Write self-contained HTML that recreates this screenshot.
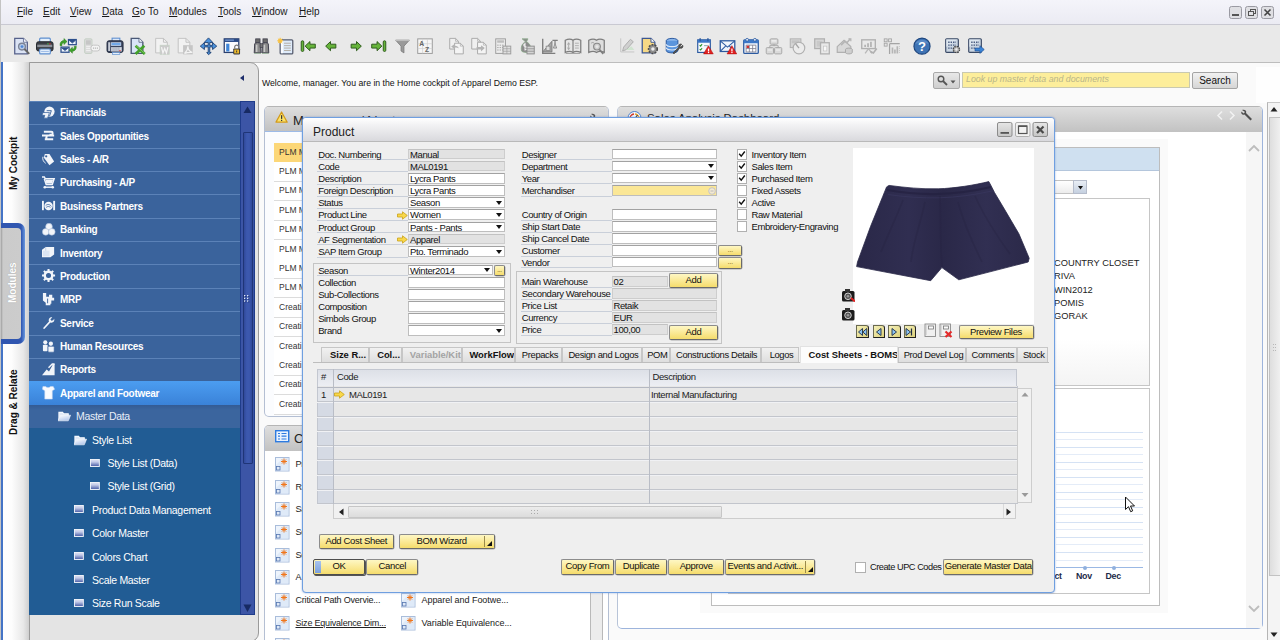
<!DOCTYPE html>
<html><head><meta charset="utf-8">
<style>
*{box-sizing:border-box;margin:0;padding:0}
html,body{width:1280px;height:640px;overflow:hidden;background:#fafafa;font-family:"Liberation Sans",sans-serif;font-size:9px;color:#222}
.a{position:absolute}
.t{position:absolute;white-space:nowrap;line-height:1}
#menubar{left:0;top:0;width:1280px;height:25px;background:linear-gradient(#f4f4fa,#ebebf3);border-bottom:1px solid #c9c9d2}
#menubar .t{top:6.5px;font-size:10px;color:#1a1a1a}
#toolbar{left:0;top:25px;width:1280px;height:37.6px;background:#e9e9e9;border-bottom:1px solid #bdbdbd}
#lstrip{left:0;top:62px;width:29px;height:578px;background:linear-gradient(90deg,#fff 0,#fdfdfd 40%,#e8e8e8 80%,#cfcfcf 100%)}
#lpanel{left:29px;top:62px;width:230px;height:580px;background:#e4e4e4;border:1px solid #9a9a9a;border-radius:0 9px 9px 0}
.mi{position:absolute;left:29px;width:212px;height:23.38px;background:#3a639c;border-top:1px solid #5b82b8;color:#fff;font-weight:bold;font-size:10px;letter-spacing:-.3px}
.mi span{position:absolute;top:6.5px;white-space:nowrap;line-height:1}
.mi.sub{background:#215c94;border-top:1px solid #215c94;font-weight:normal;font-size:10.5px;letter-spacing:-.3px}
.mi.sub span{top:5.5px}
.vt{position:absolute;white-space:nowrap;transform-origin:0 0;transform:rotate(-90deg);font-weight:bold;font-size:10.5px;line-height:1}
/* widgets */
.wg{position:absolute;border:1px solid #b4bfd3;border-top-color:#b5b5b5;border-radius:5px 5px 0 0;background:#fff}
.wh{position:absolute;left:0;top:0;right:0;height:25px;background:linear-gradient(#dedede,#c2c2c2);border-radius:4px 4px 0 0}
.row{position:absolute;left:9px;height:19.5px;border-bottom:1px solid #dcdcdc;font-size:8.5px;color:#333}
.row span{position:absolute;left:5px;top:4.5px;line-height:1;white-space:nowrap}
/* dialog */
#dlg .l{position:absolute;white-space:nowrap;line-height:1;font-size:9.5px;letter-spacing:-.4px;color:#111;border-bottom:1px solid #c9cfd9;height:10.7px;padding-left:1.2px}
#dlg .f{position:absolute;height:10.7px;background:#fff;border:1px solid #bebebe;border-top-color:#a2a2a2;font-size:9.5px;letter-spacing:-.4px;line-height:9.5px;padding-left:1px;white-space:nowrap;overflow:visible;color:#111}
#dlg .f.g{background:#e2e2e2;border-color:#cdcdcd;border-top-color:#c2c2c2}
#dlg .f.y{background:#fbe796}
#dlg .dd:after{content:"";position:absolute;right:2.5px;top:2.5px;border:3px solid transparent;border-top:4px solid #111;border-bottom:0}
.yb{position:absolute;background:linear-gradient(#fef7c4,#fbeb9c 45%,#f5dc6c);border:1px solid #8c8c8c;border-bottom-color:#6a6a6a;border-right-color:#6a6a6a;border-radius:2px;font-size:9.5px;letter-spacing:-.35px;text-align:center;color:#111;white-space:nowrap;box-shadow:.5px .5px 0 #aaa}
.cb{position:absolute;width:10px;height:10px;background:#fff;border:1px solid #b0b0b0}
.tab{position:absolute;top:346.5px;height:15px;border:1px solid #c6c6c6;border-bottom:0;background:linear-gradient(#f1f1f1,#dedede);font-size:9.4px;letter-spacing:-.35px;line-height:14px;padding-left:3px;text-align:center;white-space:nowrap;overflow:hidden;color:#111}
</style></head><body>
<div id="menubar" class="a">
<span class="t" style="left:17px"><u>F</u>ile</span>
<span class="t" style="left:43px"><u>E</u>dit</span>
<span class="t" style="left:70px"><u>V</u>iew</span>
<span class="t" style="left:102px"><u>D</u>ata</span>
<span class="t" style="left:132px"><u>G</u>o To</span>
<span class="t" style="left:169px"><u>M</u>odules</span>
<span class="t" style="left:218px"><u>T</u>ools</span>
<span class="t" style="left:252px"><u>W</u>indow</span>
<span class="t" style="left:299px"><u>H</u>elp</span>
</div>
<div id="toolbar" class="a"></div>
<svg class="a" style="left:1225px;top:3px" width="55" height="18" viewBox="0 0 55 18">
<g fill="#dfdfe3" stroke="#9a9aa2" stroke-width="1">
<rect x="4.5" y="3.5" width="12" height="12" rx="2"/><rect x="20.5" y="3.5" width="12" height="12" rx="2"/><rect x="36.5" y="3.5" width="12" height="12" rx="2"/></g>
<rect x="7" y="11" width="7" height="2" fill="#555"/>
<g fill="none" stroke="#555" stroke-width="1"><rect x="25.5" y="6.5" width="5" height="4"/><rect x="23.5" y="8.5" width="5" height="4" fill="#e2e2e6"/></g>
<path d="M39.5 6.5l6 6M45.5 6.5l-6 6" stroke="#444" stroke-width="1.6"/>
</svg>
<svg class="a" style="left:0;top:25px" width="1280" height="37" viewBox="0 0 1280 37" font-family="Liberation Sans"><g transform="translate(13.27 12.400) scale(.97)"><path d="M1.500 1h9l4 4v12h-13z" fill="#dbe3f4" stroke="#56618a" stroke-width="1.300"/><path d="M10.500 1v4h4" fill="#f4f6fb" stroke="#56618a" stroke-width=".8"/><circle cx="9" cy="9.500" r="3.500" fill="#b9cdea" stroke="#7c8496" stroke-width="1.400"/><circle cx="9" cy="9.500" r="1.500" fill="#4f86d6"/><path d="M11.500 12l5 5" stroke="#666" stroke-width="2"/></g><g transform="translate(35.77 12.400) scale(.97)"><rect x="4" y=".8" width="11" height="5" rx="1" fill="#e4effb" stroke="#5e8fd0" stroke-width="1.200"/><rect x=".8" y="4.500" width="17" height="9.500" rx="2" fill="#3c3f46" stroke="#22252a"/><rect x="1.500" y="7.500" width="15.500" height="2.500" fill="#8b9098"/><rect x="12" y="6" width="1.200" height="1.200" fill="#4c4"/><rect x="14" y="6" width="1.200" height="1.200" fill="#e33"/><rect x="4" y="12" width="11" height="5" rx="1" fill="#e4effb" stroke="#5e8fd0" stroke-width="1.200"/><path d="M5.500 14.500h8" stroke="#9dbbe6"/></g><g transform="translate(59.27 12.400) scale(.97)"><rect x="9.500" y="2.200" width="8" height="5.300" fill="#eef3fb" stroke="#2d4f8c" stroke-width="1.300"/><path d="M10 2.800l3.500 3 3.500-3" fill="#2d4f8c" stroke="#2d4f8c" stroke-width=".8"/><rect x="1.800" y="10" width="8.300" height="5.300" fill="#eef3fb" stroke="#2d4f8c" stroke-width="1.300"/><path d="M2.300 10.600l3.600 3 3.600-3" fill="#2d4f8c" stroke="#2d4f8c" stroke-width=".8"/><path d="M.8 8.500C.5 5 2.500 3.300 4.800 3.300V1.200L8 4.300 4.800 7.400V5.500C3.300 5.500 2.600 6.500 2.800 8.500z" fill="#3fa22c" stroke="#2a7a1c" stroke-width=".5"/><path d="M17.500 9c.3 3.500-1.700 5.200-4 5.200v2.100l-3.200-3.100 3.200-3.100V12c1.500 0 2.200-1 2-3z" fill="#3fa22c" stroke="#2a7a1c" stroke-width=".5"/></g><g transform="translate(82.27 12.400) scale(.97)"><rect x="2.500" y="1.500" width="7.500" height="15" rx="1" fill="#dcdcdc" stroke="#bccabc" stroke-width=".8"/><rect x="3.800" y="3" width="5" height="4.500" fill="#c6c6c6"/><path d="M4 9.500h4.500M4 11.500h4.500M4 13.500h4.500" stroke="#f0f0f0" stroke-width="1"/><rect x="9" y="8" width="9" height="6" rx="2.500" fill="#f4f4f4" stroke="#c4c4c4"/><path d="M11 11h5.500" stroke="#b5b5b5" stroke-width="1.300" stroke-dasharray="1.200 .8"/></g><g transform="translate(106.27 12.400) scale(.97)"><rect x="6" y=".8" width="8" height="4" fill="#dce8f8" stroke="#5e8fd0" stroke-width="1.100"/><rect x=".8" y="3.500" width="16.500" height="12" rx="2" fill="#3b4660" stroke="#232b3e"/><rect x="2" y="5" width="2" height="9" fill="#c9ced8"/><rect x="5" y="5.500" width="10" height="3" fill="#6fa8ea" stroke="#e4ecf8" stroke-width=".6"/><rect x="5" y="10" width="11" height="4.500" fill="#d2d7e0"/><path d="M7 10v4.500M9 10v4.500M11 10v4.500M13 10v4.500" stroke="#8a93a6" stroke-width=".7"/><rect x="13.500" y="13" width="1.200" height="1.200" fill="#e33"/><rect x="6.500" y="15.500" width="7.500" height="2" fill="#e4effb" stroke="#5e8fd0" stroke-width=".7"/></g><g transform="translate(129.27 12.400) scale(.97)"><path d="M2 1h8l4 4v11.500H2z" fill="#d8e5f7" stroke="#4a5876" stroke-width="1.400"/><path d="M10 1v4h4" fill="#f4f7fc" stroke="#4a5876" stroke-width=".8"/><path d="M6.500 8.500l9.500 8.500M15.500 8.500l-9 8.500" stroke="#43a12a" stroke-width="2.800"/><path d="M7 8.500l9 8" stroke="#8fd070" stroke-width=".8"/></g><g transform="translate(152.77 12.400) scale(.97)"><path d="M3 1h8l4 4v11H3z" fill="#f2f2f2" stroke="#c2c2c2"/><path d="M11 1v4h4" fill="none" stroke="#c2c2c2"/><rect x="7.500" y="8" width="9.500" height="9.500" fill="#cbcbcb" stroke="#c3d3c3" stroke-width=".6"/><path d="M9 10l1.500 6 1.800-4.500 1.800 4.500 1.500-6" fill="none" stroke="#f4f4f4" stroke-width="1.300"/></g><g transform="translate(176.27 12.400) scale(.97)"><path d="M2 1h8l4 4v11H2z" fill="#f2f2f2" stroke="#c2c2c2"/><path d="M10 1v4h4" fill="none" stroke="#c2c2c2"/><rect x="7" y="8" width="10" height="9.500" fill="#c6c6c6"/><path d="M8.500 16.500c2-2 3.500-5 3.500-7.500 0 3 2 5.500 4.500 6.500-3-.3-5.500 0-8 1z" fill="none" stroke="#f4f4f4" stroke-width="1.200"/></g><g transform="translate(199.77 12.400) scale(.97)"><path d="M9 .5l4.500 4.800h-3.200v2.900h2.900V5.500l4.300 3.500-4.300 3.500V9.800h-2.900v5.700h1.500L9 17.800 7.200 15.500h1.500V9.800H4.800v2.700L.5 9l4.300-3.500v2.700h3.900V5.300H4.500z" fill="#4a92dc" stroke="#1d3f73" stroke-width=".9" stroke-linejoin="round"/></g><g transform="translate(223.27 12.400) scale(.97)"><rect x="1" y="1.500" width="15" height="14" fill="#fbfcfe" stroke="#2a3f6e" stroke-width="1.300"/><rect x="1" y="1.500" width="15" height="3.200" fill="#2a4a86"/><rect x="2" y="2.300" width="9" height="1" fill="#8fb4e6"/><rect x="3" y="6.500" width="3.300" height="8" fill="#3f86d8"/><rect x="10.300" y="11.500" width="7" height="6" rx=".8" fill="#3a3a3a"/><rect x="11.300" y="12.500" width="5" height="4" fill="#eab82e"/><path d="M11.800 11.500V10a2 2 0 0 1 4 0v1.500" fill="none" stroke="#777" stroke-width="1.200"/><rect x="13.300" y="13.500" width="1" height="2" fill="#3a3a3a"/></g><g transform="translate(252.77 12.400) scale(.97)"><rect x="3" y="1.500" width="4.500" height="4" fill="#6a6a6a" stroke="#3c3c4a" stroke-width=".8"/><rect x="10.500" y="1.500" width="4.500" height="4" fill="#6a6a6a" stroke="#3c3c4a" stroke-width=".8"/><path d="M2 6.500c.5-1.500 5.500-1.500 6 0l.5 9.500H1.500z" fill="#8c8c8c" stroke="#3c3c4a" stroke-width="1"/><path d="M10 6.500c.5-1.500 5.500-1.500 6 0l.5 9.500h-7z" fill="#8c8c8c" stroke="#3c3c4a" stroke-width="1"/><rect x="7.500" y="6.500" width="3" height="4" fill="#777" stroke="#3c3c4a" stroke-width=".7"/><path d="M4 7.500v7.500M12 7.500v7.500" stroke="#c9c9c9" stroke-width="1.600"/><path d="M1.500 16.500h7M9.500 16.500h7" stroke="#9ab89a" stroke-width=".8"/></g><g transform="translate(276.77 12.400) scale(.97)"><rect x="3.500" y="2.500" width="13" height="14.500" rx="1" fill="#deebfa" stroke="#565c6e" stroke-width="1.300"/><rect x="4.300" y="3.300" width="2" height="13" fill="#fbfcfe"/><path d="M7.500 6h7M7.500 8.500h7M7.500 11h7M7.500 13.500h7" stroke="#b3aca4" stroke-width="1"/><circle cx="3.500" cy="3.500" r="2.300" fill="#f8c84e"/><path d="M3.500 .3v6.400M.3 3.500h6.400M1.200 1.200l4.600 4.600M5.800 1.200L1.200 5.800" stroke="#f8c040" stroke-width=".8"/></g><g transform="translate(299.77 12.400) scale(.97)"><rect x="1.500" y="3.500" width="2.600" height="11" rx="1.200" fill="#66b43a" stroke="#2d5a1c" stroke-width="1"/><path d="M5.500 9l5-4.700v2.700h5.500v4h-5.500v2.700z" fill="#66b43a" stroke="#2d5a1c" stroke-width="1"/></g><g transform="translate(322.27 12.400) scale(.97)"><path d="M3.500 9l5-4.700v2.700H14v4H8.500v2.700z" fill="#66b43a" stroke="#2d5a1c" stroke-width="1"/></g><g transform="translate(347.27 12.400) scale(.97)"><path d="M14.500 9l-5-4.700v2.700H4v4h5.500v2.700z" fill="#66b43a" stroke="#2d5a1c" stroke-width="1"/></g><g transform="translate(369.77 12.400) scale(.97)"><rect x="13.900" y="3.500" width="2.600" height="11" rx="1.200" fill="#66b43a" stroke="#2d5a1c" stroke-width="1"/><path d="M12.500 9l-5-4.700v2.700H2v4h5.500v2.700z" fill="#66b43a" stroke="#2d5a1c" stroke-width="1"/></g><g transform="translate(393.77 12.400) scale(.97)"><path d="M2 3h14l-5.500 6v7l-3-2V9z" fill="#9a9a9a" stroke="#7a7a7a" stroke-width=".8"/><path d="M2 3h14" stroke="#bdbdbd" stroke-width="1.500"/></g><g transform="translate(416.27 12.400) scale(.97)"><rect x="1.500" y="1.500" width="15" height="15" fill="#f6f6f6" stroke="#9a9a9a"/><path d="M1.500 6.500h15M1.500 11.500h15M6.500 1.500v15M11.500 1.500v15" stroke="#d0d0d0" stroke-width=".7"/><text x="3" y="8.500" font-size="7" font-weight="bold" fill="#666">A</text><text x="9" y="15" font-size="7" font-weight="bold" fill="#666">Z</text></g><g transform="translate(447.77 12.400) scale(.97)"><path d="M2 1h6l3 3v8H2z" fill="#f0f0f0" stroke="#a9a9a9"/><path d="M8 1v3h3" fill="none" stroke="#a9a9a9" stroke-width=".7"/><path d="M7 6h6l3 3v8H7z" fill="#f4f4f4" stroke="#a9a9a9"/><path d="M13 6v3h3" fill="none" stroke="#a9a9a9" stroke-width=".7"/><path d="M3.500 9.500l4-3v2c2 0 3.500 1 4 3-1-1-2.500-1.200-4-1.200v2.200z" fill="#b4b4b4"/></g><g transform="translate(470.77 12.400) scale(.97)"><path d="M1 1h6l3 3v8H1z" fill="#f0f0f0" stroke="#a9a9a9"/><path d="M7 1v3h3" fill="none" stroke="#a9a9a9" stroke-width=".7"/><path d="M7 5h6l3 3v9H7z" fill="#f4f4f4" stroke="#a9a9a9"/><path d="M13 5v3h3" fill="none" stroke="#a9a9a9" stroke-width=".7"/><path d="M14.500 11l-4-3v2H6v2.500h4.500V14.500z" fill="#b4b4b4"/></g><g transform="translate(494.27 12.400) scale(.97)"><rect x="1.500" y="1.500" width="10" height="15" fill="#ececec" stroke="#9d9d9d"/><rect x="3" y="3" width="7" height="2.500" fill="#bdbdbd"/><path d="M3 8h7M3 10.500h7M3 13h7" stroke="#a5a5a5" stroke-dasharray="1.500 1"/><rect x="9" y="9" width="8" height="8" fill="#e0e0e0" stroke="#9d9d9d"/><path d="M9 11.700h8M9 14.300h8M13 9v8" stroke="#9d9d9d" stroke-width=".7"/></g><g transform="translate(517.27 12.400) scale(.97)"><path d="M5 1.500h6l-1.500 3c4 2 5 6 4 9.500-.5 2-8 2-9 0-1-3.500 0-7.500 4-9.500z" fill="#8c8c8c" stroke="#86a886" stroke-width=".8"/><path d="M8.500 6.500c-2.500 0-2.500 2.800 0 3s2.500 3 0 3M8 5.500v8" fill="none" stroke="#f0f0f0" stroke-width="1.100"/><rect x="10" y="9" width="7.500" height="8" fill="#d4d4d4" stroke="#8e8e8e"/><path d="M10 11.700h7.500M10 14.300h7.500" stroke="#8e8e8e" stroke-width=".8"/></g><g transform="translate(540.77 12.400) scale(.97)"><path d="M2 1.500v15h13" fill="none" stroke="#7e7e7e" stroke-width="1.400"/><path d="M2 15L11.500 4v11z" fill="#a9a9a9" stroke="#7e7e7e"/><rect x="5.500" y="9" width="4" height="4.500" fill="#dcdcdc" stroke="#7e7e7e" stroke-width=".7"/><path d="M12 3h5.500M14.700 3v4" stroke="#7e7e7e" stroke-width="1.200"/><path d="M13 11l1.700-4.500 1.700 4.500z" fill="#d5d5d5" stroke="#7e7e7e" stroke-width=".8"/></g><g transform="translate(564.27 12.400) scale(.97)"><path d="M1 3c3-1.500 6-1.500 8 0 2-1.500 5-1.500 8 0v12.500c-3-1.500-6-1.500-8 0-2-1.500-5-1.500-8 0z" fill="#e6e6e6" stroke="#7e7e7e" stroke-width="1.300"/><path d="M9 3v12.500" stroke="#7e7e7e" stroke-width="1.200"/><path d="M4.500 5.500v7M3.300 7.500l1.200-2 1.200 2M3.300 10.500l1.200 2 1.200-2" stroke="#9e9e9e" fill="none" stroke-width=".8"/><path d="M11 6h4M11 8.500h4M11 11h4" stroke="#a9a9a9" stroke-width=".9"/><path d="M1.500 16.500h15" stroke="#9a9a9a" stroke-width="1"/></g><g transform="translate(587.77 12.400) scale(.97)"><path d="M1 3c3-1.500 6-1.500 8 0 2-1.500 5-1.500 8 0v12.500c-3-1.500-6-1.500-8 0-2-1.500-5-1.500-8 0z" fill="#dedede" stroke="#7e7e7e" stroke-width="1.300"/><circle cx="9.500" cy="9.500" r="3.500" fill="#cfcfcf" stroke="#8a8a8a" stroke-width="1.200"/><circle cx="9.500" cy="9.500" r="1.500" fill="#e8e8e8"/><path d="M12 12.500l4 4.500" stroke="#7e7e7e" stroke-width="1.800"/><path d="M3.500 6c1-1 2-1 3 0" fill="none" stroke="#9e9e9e"/></g><g transform="translate(618.77 12.400) scale(.97)"><path d="M2 1v14h14" fill="none" stroke="#c5c5c5"/><path d="M4 14l1-4 7-8 3 2.500-7 8z" fill="#d0d0d0" stroke="#adadad"/><path d="M7 13l6-4 3 4z" fill="#c9e2c9" opacity=".8"/></g><g transform="translate(641.27 12.400) scale(.97)"><path d="M1 1h9l4 4v11H1z" fill="#f5d886" stroke="#3d5791" stroke-width="1.300"/><path d="M10 1v4h4" fill="#fff" stroke="#3d5791"/><circle cx="12" cy="12" r="4.500" fill="#8e8e8e" stroke="#4a4a4a" stroke-dasharray="2 1.200" stroke-width="1.600"/><circle cx="12" cy="12" r="1.800" fill="#eee"/></g><g transform="translate(665.27 12.400) scale(.97)"><ellipse cx="7" cy="3.500" rx="6" ry="2.500" fill="#8ab6ea" stroke="#2c5aa0"/><path d="M1 3.500v10c0 3.300 12 3.300 12 0v-10" fill="#5b95dd" stroke="#2c5aa0"/><path d="M1 7c0 3.300 12 3.300 12 0M1 10.500c0 3.300 12 3.300 12 0" fill="none" stroke="#dfeaf8" stroke-width="1.200"/><path d="M8 16l6-6c-1-2 1-4 3-3l-2 2 1 1 2-2c1 2-1 4-3 3l-6 6z" fill="#555" stroke="#333" stroke-width=".6"/></g><g transform="translate(696.27 12.400) scale(.97)"><rect x="1.500" y="2.500" width="13" height="13" fill="#f6f9fd" stroke="#2c5aa0" stroke-width="1.200"/><rect x="1.500" y="2.500" width="13" height="3" fill="#3c78c8"/><path d="M4 1v3M12 1v3" stroke="#2c5aa0" stroke-width="1.500"/><path d="M3.500 8l1 1 1.500-2M3.500 12l1 1 1.500-2" stroke="#2f9a2f" fill="none" stroke-width="1.100"/><path d="M8 8.500h4" stroke="#8aa" /><path d="M12.500 8.500l5 8.500h-10z" fill="#e02222" stroke="#a80000" stroke-width=".5"/><rect x="12" y="11.500" width="1.300" height="3" fill="#fff"/><rect x="12" y="15" width="1.300" height="1.200" fill="#fff"/></g><g transform="translate(719.27 12.400) scale(.97)"><rect x="1" y="3.500" width="15" height="11" fill="#f2f6fc" stroke="#2c5aa0" stroke-width="1.300"/><path d="M1 3.500l7.500 6.500L16 3.500M1 14.500l5.500-5.500M16 14.500L10.500 9" fill="none" stroke="#2c5aa0" stroke-width="1.100"/><path d="M13 8.500l5 8.500H8z" fill="#e02222" stroke="#a80000" stroke-width=".5"/><rect x="12.400" y="11.500" width="1.300" height="3" fill="#fff"/><rect x="12.400" y="15" width="1.300" height="1.200" fill="#fff"/></g><g transform="translate(742.27 12.400) scale(.97)"><rect x="1.500" y="2.500" width="15" height="14" rx="1" fill="#eef3fb" stroke="#2c5aa0" stroke-width="1.300"/><rect x="1.500" y="2.500" width="15" height="3.500" fill="#3c78c8"/><circle cx="5" cy="2.500" r="1.500" fill="#dfe7f3" stroke="#2c5aa0" stroke-width=".8"/><circle cx="13" cy="2.500" r="1.500" fill="#dfe7f3" stroke="#2c5aa0" stroke-width=".8"/><path d="M4 8h10v7H4zM4 11.500h10M7.300 8v7M10.700 8v7" fill="#fff" stroke="#7a7a8a" stroke-width=".8"/><rect x="4.500" y="8.500" width="2.500" height="2.500" fill="#d03030"/></g><g transform="translate(765.27 12.400) scale(.97)"><rect x="5" y="1.500" width="8" height="5.500" rx="1" fill="#dadada" stroke="#a8a8a8"/><rect x="1" y="10.500" width="7.500" height="6.500" rx="1" fill="#dadada" stroke="#a8a8a8"/><rect x="9.500" y="10.500" width="7.500" height="6.500" rx="1" fill="#dadada" stroke="#a8a8a8"/><path d="M9 7v2M4.700 10.500v-2h8.600v2" fill="none" stroke="#a8a8a8"/><path d="M6.500 3.500h5M2.500 13h4.500M11 13h4.500" stroke="#f2f2f2" stroke-width="1.200"/></g><g transform="translate(788.77 12.400) scale(.97)"><rect x="1.500" y="1.500" width="11" height="9" fill="#d6d6d6" stroke="#b0b0b0"/><rect x="3" y="3" width="8" height="3" fill="#c4c4c4"/><circle cx="10.500" cy="11" r="6" fill="#ececec" stroke="#b0b0b0" stroke-width="1.200"/><path d="M10.500 11L7 6.500" stroke="#a5a5a5" stroke-width="1.400"/></g><g transform="translate(813.27 12.400) scale(.97)"><rect x="1.500" y="1.500" width="10" height="10" fill="#d8d8d8" stroke="#b0b0b0" stroke-width="1.300"/><rect x="3.500" y="3.500" width="6" height="6" fill="#c9c9c9"/><rect x="7.500" y="5.500" width="9" height="11.500" fill="#e9e9e9" stroke="#b0b0b0" stroke-width="1.300"/><rect x="10.500" y="9" width="3.500" height="5" fill="#f8f8f8" stroke="#c2c2c2" stroke-width=".7"/></g><g transform="translate(836.27 12.400) scale(.97)"><path d="M1 9.500l7-6.500 7 6.500v6H1z" fill="#d9d9d9" stroke="#b0b0b0" stroke-width="1.200"/><path d="M5 8l4-4 2 1.500 3.500-4" fill="none" stroke="#b5b5b5" stroke-width="1.600"/><path d="M12.500 1.500h2.500v2.500" fill="none" stroke="#b5b5b5" stroke-width="1.300"/><ellipse cx="13" cy="12.500" rx="3.500" ry="1.500" fill="#cfcfcf" stroke="#a8a8a8"/><path d="M9.500 12.500v3c0 2 7 2 7 0v-3" fill="#cfcfcf" stroke="#a8a8a8"/></g><g transform="translate(860.27 12.400) scale(.97)"><rect x="1.500" y="2.500" width="14" height="9" fill="#e9e9e9" stroke="#b0b0b0" stroke-width="1.400"/><path d="M5 10v-2.500M8 10V6M11 10V4.500" stroke="#b0b0b0" stroke-width="1.700"/><path d="M5 16.500l3.500-5 3.500 5" fill="none" stroke="#b8b8b8" stroke-width="1.300"/><path d="M10.500 14.500l3 1.500 3.500-4.500" fill="none" stroke="#b0b0b0" stroke-width="1.700"/></g><g transform="translate(883.27 12.400) scale(.97)"><rect x="1" y="1.500" width="3" height="3" fill="#e4e4e4" stroke="#a5a5a5" stroke-width=".9"/><rect x="5.500" y="1.500" width="3" height="3" fill="#e4e4e4" stroke="#a5a5a5" stroke-width=".9"/><rect x="1" y="6" width="3" height="3" fill="#e4e4e4" stroke="#a5a5a5" stroke-width=".9"/><path d="M6.500 6.500H17M6.500 6.500V17" fill="none" stroke="#a5a5a5" stroke-width="1.300"/><path d="M9.500 16.500v-6M12 16.500v-4M14.500 16.500V9" stroke="#b5b5b5" stroke-width="1.700"/><path d="M16.700 9v7.500" stroke="#c5c5c5" stroke-dasharray="1 1"/></g><g transform="translate(913.27 12.400) scale(.97)"><circle cx="9" cy="9" r="8.300" fill="#3e73b4" stroke="#1e467e" stroke-width="1.200"/><path d="M2 7a7.300 6 0 0 1 14 0c-4-2-10-2-14 0z" fill="#6f9bd2" opacity=".6"/><text x="5" y="14" font-size="13.500" font-weight="bold" fill="#fff">?</text></g><g transform="translate(944.27 12.400) scale(.97)"><rect x="1.500" y="1.500" width="13" height="14" rx="1" fill="#c9d5e2" stroke="#3a4a66" stroke-width="1.200"/><path d="M2 2l12 0L2 10z" fill="#e6edf5" opacity=".7"/><path d="M4 5h8M4 8h8M4 11h6" stroke="#4a5c80" stroke-dasharray="1.500 1" stroke-width="1.300"/><circle cx="12.500" cy="12.500" r="3.200" fill="#bbb" stroke="#444" stroke-dasharray="1.500 1" stroke-width="1.400"/><circle cx="12.500" cy="12.500" r="1.200" fill="#eee"/></g><g transform="translate(967.27 12.400) scale(.97)"><rect x="1.500" y="1.500" width="13" height="14" rx="1" fill="#c9d5e2" stroke="#3a4a66" stroke-width="1.200"/><path d="M2 2l12 0L2 10z" fill="#e6edf5" opacity=".7"/><path d="M4 5h8M4 8h8M4 11h4" stroke="#4a5c80" stroke-dasharray="1.500 1" stroke-width="1.300"/><path d="M8 11h5V8.500l4.500 4-4.500 4V14H8z" fill="#3c85d6" stroke="#1d4f96" stroke-width=".7"/></g></svg>
<div id="lstrip" class="a"></div>
<div class="a" style="left:0;top:0;width:1.300px;height:640px;background:#c4c4c4"></div>
<div class="a" style="left:1.300px;top:62px;width:1.800px;height:578px;background:#4474c6"></div>
<div id="lpanel" class="a"></div>
<span class="vt" style="left:9px;top:189.500px;font-size:10px;color:#111">My Cockpit</span>
<span class="vt" style="left:8.500px;top:434.500px;font-size:10px;color:#111">Drag &amp; Relate</span>
<div class="a" style="left:1px;top:223px;width:24px;height:121px;border-radius:0 7px 7px 0;background:linear-gradient(90deg,#3056b0 0,#3056b0 84%,#6a99df 100%)"></div><div class="a" style="left:1px;top:227.500px;width:19.500px;height:111.500px;border-radius:0 4px 4px 0;background:linear-gradient(90deg,#a0a0a0,#cbcbcb 2px,#cccccc)"></div>
<span class="vt" style="left:7.500px;top:303px;color:#fff;font-size:10px;text-shadow:0 0 1px #999">Modules</span>
<svg class="a" style="left:238px;top:73px" width="8" height="10"><path d="M6 2v6L2 5z" fill="#1d2d6b"/></svg>
<div class="a" style="left:29px;top:100.8px;width:212px;height:300px;background:#3a639c"></div><div class="a" style="left:29px;top:400px;width:212px;height:214.800px;background:#215c94"></div><div class="mi" style="top:100.80px;"><svg class="a" style="left:13.0px;top:4.0px" width="14" height="14" viewBox="0 0 15 15"><circle cx="8" cy="6" r="5.500" fill="#f2f5fa"/><path d="M1 7h7L6 13H2l1-3H0z" fill="#f2f5fa" stroke="#3a639c" stroke-width=".8"/><path d="M5 5h5l-2 6" fill="none" stroke="#3a639c" stroke-width="1"/></svg><span style="left:31.0px">Financials</span></div>
<div class="mi" style="top:124.18px;"><svg class="a" style="left:13.0px;top:4.0px" width="14" height="14" viewBox="0 0 15 15"><path d="M2 3h8c2 0 2 3 0 3H8M0 7h13M3 11h9M6 8c-2 0-2 3 0 3" fill="none" stroke="#f2f5fa" stroke-width="2"/></svg><span style="left:31.0px">Sales Opportunities</span></div>
<div class="mi" style="top:147.56px;"><svg class="a" style="left:13.0px;top:4.0px" width="14" height="14" viewBox="0 0 15 15"><path d="M3 1l5 0 5 8-5 4-6-8z" fill="#f2f5fa"/><circle cx="4.500" cy="3.500" r="1.200" fill="#3a639c"/><path d="M1 4c-1 3 1 6 3 7" fill="none" stroke="#f2f5fa" stroke-width="1"/></svg><span style="left:31.0px">Sales - A/R</span></div>
<div class="mi" style="top:170.94px;"><svg class="a" style="left:13.0px;top:4.0px" width="14" height="14" viewBox="0 0 15 15"><path d="M0 1h2.500l1 2H13l-2 6H4.500L2.500 3" fill="none" stroke="#f2f5fa" stroke-width="1.600"/><path d="M4 4h8l-1.500 4h-6z" fill="#f2f5fa"/><path d="M3 12h9" stroke="#f2f5fa" stroke-width="1.500"/><circle cx="3" cy="12" r="1.400" fill="#f2f5fa"/><circle cx="11.500" cy="12" r="1.400" fill="#f2f5fa"/></svg><span style="left:31.0px">Purchasing - A/P</span></div>
<div class="mi" style="top:194.32px;"><svg class="a" style="left:13.0px;top:4.0px" width="14" height="14" viewBox="0 0 15 15"><rect x="0" y="2" width="2" height="10" fill="#f2f5fa"/><rect x="12" y="2" width="2" height="10" fill="#f2f5fa"/><circle cx="7" cy="7.500" r="4.500" fill="#f2f5fa"/><path d="M4 7c2-2 5-1 6 1M4.500 9c1.500-1.500 3.500-1 4.500 0" fill="none" stroke="#3a639c" stroke-width=".9"/></svg><span style="left:31.0px">Business Partners</span></div>
<div class="mi" style="top:217.70px;"><svg class="a" style="left:13.0px;top:4.0px" width="14" height="14" viewBox="0 0 15 15"><circle cx="7.500" cy="4" r="3.600" fill="#f2f5fa" stroke="#9fb6d6" stroke-width=".6"/><circle cx="4" cy="9.500" r="3.600" fill="#f2f5fa" stroke="#9fb6d6" stroke-width=".6"/><circle cx="10.500" cy="9.500" r="3.600" fill="#f2f5fa" stroke="#9fb6d6" stroke-width=".6"/></svg><span style="left:31.0px">Banking</span></div>
<div class="mi" style="top:241.08px;"><svg class="a" style="left:13.0px;top:4.0px" width="14" height="14" viewBox="0 0 15 15"><path d="M0 4l4-3h9v8l-4 3H0z" fill="#f2f5fa"/><path d="M4 1v8M0 4h0" stroke="#b9c9e0" stroke-width=".8"/><path d="M1 5h7v6H1z" fill="#dbe5f3"/></svg><span style="left:31.0px">Inventory</span></div>
<div class="mi" style="top:264.46px;"><svg class="a" style="left:13.0px;top:4.0px" width="14" height="14" viewBox="0 0 15 15"><circle cx="7" cy="7" r="4" fill="none" stroke="#f2f5fa" stroke-width="2.600"/><path d="M7 0v14M0 7h14M2 2l10 10M12 2L2 12" stroke="#f2f5fa" stroke-width="2.200" stroke-dasharray="2.500 9 2.500 0"/><circle cx="7" cy="7" r="2.200" fill="#3a639c"/></svg><span style="left:31.0px">Production</span></div>
<div class="mi" style="top:287.84px;"><svg class="a" style="left:13.0px;top:4.0px" width="14" height="14" viewBox="0 0 15 15"><path d="M1 0h3.500v4h3V2H11v3h2v3h-3v3.500H9V13H4v-2.500L1 8z" fill="#f2f5fa"/><path d="M6 6v5" stroke="#3a639c"/></svg><span style="left:31.0px">MRP</span></div>
<div class="mi" style="top:311.22px;"><svg class="a" style="left:13.0px;top:4.0px" width="14" height="14" viewBox="0 0 15 15"><path d="M1 13l6.500-7c-1-2.500 1-5 3.500-4.500l-2 2 1 1.500 2-.5 1-1.500c1 2.500-1.500 5-4 4L2.500 14z" fill="#f2f5fa"/></svg><span style="left:31.0px">Service</span></div>
<div class="mi" style="top:334.60px;"><svg class="a" style="left:13.0px;top:4.0px" width="14" height="14" viewBox="0 0 15 15"><circle cx="3.500" cy="2.500" r="2.200" fill="#f2f5fa"/><rect x="1" y="5" width="5" height="7" rx="1" fill="#f2f5fa"/><circle cx="9.500" cy="4" r="2.300" fill="#f2f5fa"/><rect x="6.500" y="6.800" width="6.500" height="6.200" rx="1" fill="#f2f5fa" stroke="#3a639c" stroke-width=".6"/></svg><span style="left:31.0px">Human Resources</span></div>
<div class="mi" style="top:357.98px;"><svg class="a" style="left:13.0px;top:4.0px" width="14" height="14" viewBox="0 0 15 15"><path d="M0 13L5 7l2.500 2L11 3V1l2.500 0v12z" fill="#f2f5fa"/><path d="M7 5l4-4 2.500 0" fill="none" stroke="#f2f5fa" stroke-width="1.500"/></svg><span style="left:31.0px">Reports</span></div>
<div class="mi" style="top:381.36px;background:linear-gradient(#4b9cf0,#3a82d8);border-top:1px solid #4b9cf0;"><svg class="a" style="left:13.0px;top:4.0px" width="14" height="14" viewBox="0 0 15 15"><path d="M1 0.500l3 0c1 1.500 4 1.500 5 0l3 0 1.500 3-2.500 1.500V14H3V5L.5 3.500z" fill="#fafcff" stroke="#c9d8ee" stroke-width=".6"/></svg><span style="left:31.0px">Apparel and Footwear</span></div>
<div class="mi" style="top:404.74px;background:linear-gradient(#335b94,#3b659e 5px);border-top:0;font-weight:normal;font-size:10.5px;letter-spacing:-.3px;color:#e8eef8;"><svg class="a" style="left:28.5px;top:6.0px" width="14" height="14" viewBox="0 0 15 15"><defs><linearGradient id="fg" x1="0" y1="0" x2=".6" y2="1"><stop offset="0" stop-color="#ffffff"/><stop offset="1" stop-color="#b4c8ec"/></linearGradient></defs><path d="M1 10V1.500h4l1 1.500h5v2" fill="#dfe8f6" stroke="#f4f8fd" stroke-width="1.200"/><path d="M0 10.500l2.500-6h11l-2.500 6z" fill="url(#fg)" stroke="#eef3fb" stroke-width=".7"/></svg><span style="left:47.0px">Master Data</span></div>
<div class="mi sub" style="top:428.12px;"><svg class="a" style="left:44.5px;top:6.0px" width="14" height="14" viewBox="0 0 15 15"><defs><linearGradient id="fg" x1="0" y1="0" x2=".6" y2="1"><stop offset="0" stop-color="#ffffff"/><stop offset="1" stop-color="#b4c8ec"/></linearGradient></defs><path d="M1 10V1.500h4l1 1.500h5v2" fill="#dfe8f6" stroke="#f4f8fd" stroke-width="1.200"/><path d="M0 10.500l2.500-6h11l-2.500 6z" fill="url(#fg)" stroke="#eef3fb" stroke-width=".7"/></svg><span style="left:63.0px">Style List</span></div>
<div class="mi sub" style="top:451.50px;"><svg class="a" style="left:60.5px;top:6.0px" width="14" height="14" viewBox="0 0 15 15"><defs><linearGradient id="wg" x1="0" y1="0" x2="0" y2="1"><stop offset="0" stop-color="#dfe3f4"/><stop offset=".35" stop-color="#c3cae8"/><stop offset="1" stop-color="#4358a4"/></linearGradient></defs><rect x=".5" y=".5" width="9.500" height="7.500" fill="url(#wg)" stroke="#f4f6fb" stroke-width="1"/></svg><span style="left:78.5px">Style List (Data)</span></div>
<div class="mi sub" style="top:474.88px;"><svg class="a" style="left:60.5px;top:6.0px" width="14" height="14" viewBox="0 0 15 15"><defs><linearGradient id="wg" x1="0" y1="0" x2="0" y2="1"><stop offset="0" stop-color="#dfe3f4"/><stop offset=".35" stop-color="#c3cae8"/><stop offset="1" stop-color="#4358a4"/></linearGradient></defs><rect x=".5" y=".5" width="9.500" height="7.500" fill="url(#wg)" stroke="#f4f6fb" stroke-width="1"/></svg><span style="left:78.5px">Style List (Grid)</span></div>
<div class="mi sub" style="top:498.26px;"><svg class="a" style="left:44.5px;top:6.0px" width="14" height="14" viewBox="0 0 15 15"><defs><linearGradient id="wg" x1="0" y1="0" x2="0" y2="1"><stop offset="0" stop-color="#dfe3f4"/><stop offset=".35" stop-color="#c3cae8"/><stop offset="1" stop-color="#4358a4"/></linearGradient></defs><rect x=".5" y=".5" width="9.500" height="7.500" fill="url(#wg)" stroke="#f4f6fb" stroke-width="1"/></svg><span style="left:63.0px">Product Data Management</span></div>
<div class="mi sub" style="top:521.64px;"><svg class="a" style="left:44.5px;top:6.0px" width="14" height="14" viewBox="0 0 15 15"><defs><linearGradient id="wg" x1="0" y1="0" x2="0" y2="1"><stop offset="0" stop-color="#dfe3f4"/><stop offset=".35" stop-color="#c3cae8"/><stop offset="1" stop-color="#4358a4"/></linearGradient></defs><rect x=".5" y=".5" width="9.500" height="7.500" fill="url(#wg)" stroke="#f4f6fb" stroke-width="1"/></svg><span style="left:63.0px">Color Master</span></div>
<div class="mi sub" style="top:545.02px;"><svg class="a" style="left:44.5px;top:6.0px" width="14" height="14" viewBox="0 0 15 15"><defs><linearGradient id="wg" x1="0" y1="0" x2="0" y2="1"><stop offset="0" stop-color="#dfe3f4"/><stop offset=".35" stop-color="#c3cae8"/><stop offset="1" stop-color="#4358a4"/></linearGradient></defs><rect x=".5" y=".5" width="9.500" height="7.500" fill="url(#wg)" stroke="#f4f6fb" stroke-width="1"/></svg><span style="left:63.0px">Colors Chart</span></div>
<div class="mi sub" style="top:568.40px;"><svg class="a" style="left:44.5px;top:6.0px" width="14" height="14" viewBox="0 0 15 15"><defs><linearGradient id="wg" x1="0" y1="0" x2="0" y2="1"><stop offset="0" stop-color="#dfe3f4"/><stop offset=".35" stop-color="#c3cae8"/><stop offset="1" stop-color="#4358a4"/></linearGradient></defs><rect x=".5" y=".5" width="9.500" height="7.500" fill="url(#wg)" stroke="#f4f6fb" stroke-width="1"/></svg><span style="left:63.0px">Scale Master</span></div>
<div class="mi sub" style="top:591.78px;"><svg class="a" style="left:44.5px;top:6.0px" width="14" height="14" viewBox="0 0 15 15"><defs><linearGradient id="wg" x1="0" y1="0" x2="0" y2="1"><stop offset="0" stop-color="#dfe3f4"/><stop offset=".35" stop-color="#c3cae8"/><stop offset="1" stop-color="#4358a4"/></linearGradient></defs><rect x=".5" y=".5" width="9.500" height="7.500" fill="url(#wg)" stroke="#f4f6fb" stroke-width="1"/></svg><span style="left:63.0px">Size Run Scale</span></div>
<div class="a" style="left:240px;top:100.8px;width:15px;height:514px;background:#3c55a6;border:1px solid #1f3c8a"></div>
<div class="a" style="left:243px;top:131.500px;width:9.500px;height:332px;background:linear-gradient(90deg,#30499a,#3c58ae 35%,#3c58ae 65%,#30499a);border:1px solid #1f3577;border-radius:1px"></div>
<svg class="a" style="left:243px;top:293px" width="8" height="10"><g fill="#e8eefa"><rect x="1" y="2" width="1.300" height="1.300"/><rect x="4" y="2" width="1.300" height="1.300"/><rect x="1" y="4.700" width="1.300" height="1.300"/><rect x="4" y="4.700" width="1.300" height="1.300"/><rect x="1" y="7.400" width="1.300" height="1.300"/><rect x="4" y="7.400" width="1.300" height="1.300"/></g><g fill="#1a2c66"><rect x="2.300" y="3" width="1" height="1"/><rect x="5.300" y="3" width="1" height="1"/><rect x="2.300" y="5.700" width="1" height="1"/><rect x="5.300" y="5.700" width="1" height="1"/><rect x="2.300" y="8.400" width="1" height="1"/><rect x="5.300" y="8.400" width="1" height="1"/></g></svg>
<svg class="a" style="left:240px;top:100.8px" width="15" height="514"><path d="M3.500 12h8l-4-6.500z" fill="#172a63"/><path d="M3.500 503.500h8l-4 7.500z" fill="#172a63"/></svg>
<span class="t" style="left:262px;top:79px;font-size:8.7px;color:#111">Welcome, manager. You are in the Home cockpit of Apparel Demo ESP.</span>
<div class="a" style="left:933px;top:72px;width:27px;height:17px;background:linear-gradient(#e8e8e8,#cfcfcf);border:1px solid #a9a9a9;border-radius:2px"></div>
<svg class="a" style="left:936px;top:74px" width="22" height="13"><circle cx="5" cy="5" r="2.800" fill="none" stroke="#555" stroke-width="1.400"/><path d="M7 7l4 4" stroke="#555" stroke-width="1.800"/><path d="M14.500 6.500h5l-2.500 3z" fill="#555"/></svg>
<div class="a" style="left:962px;top:72px;width:228px;height:16px;background:#fdee9b;border:1px solid #c9c9b0"></div>
<span class="t" style="left:966px;top:75px;font-size:8.8px;font-style:italic;color:#b9b68a">Look up master data and documents</span>
<div class="a" style="left:1192px;top:72px;width:46px;height:17px;background:linear-gradient(#f1f1f1,#d6d6d6);border:1px solid #a4a4a4;border-radius:2px;font-size:10px;text-align:center;line-height:15px;color:#111">Search</div>
<div class="a" style="left:1256px;top:67px;width:24px;height:36px;background:#fefefe"></div>
<div class="a" style="left:1267px;top:102px;width:13px;height:538px;background:#f4f4f4;border-left:1px solid #b5b5b5;border-top:1px solid #c8c8c8"></div>
<div class="a" style="left:1269px;top:117px;width:11px;height:459px;background:linear-gradient(90deg,#dedede,#f0f0f0);border:1px solid #c2c2c2;border-right:0"></div>
<svg class="a" style="left:1268px;top:103px" width="12" height="537"><path d="M2.500 8.500h7l-3.500-4.500z" fill="#222"/><path d="M2.500 529.500h7l-3.500 4.500z" fill="#222"/><g fill="#b8b8b8"><rect x="5" y="241" width="1" height="1"/><rect x="7" y="241" width="1" height="1"/><rect x="5" y="244" width="1" height="1"/><rect x="7" y="244" width="1" height="1"/><rect x="5" y="247" width="1" height="1"/><rect x="7" y="247" width="1" height="1"/></g></svg>
<div class="wg" style="left:264px;top:106px;width:345px;height:311px;border-radius:5px;background:#fbfcfe"><div class="wh" style="border-bottom:1px solid #9dbbe8"></div><svg class="a" style="left:10px;top:3.500px" width="15" height="13" viewBox="0 0 16 14"><path d="M7 1L1 12h12z" fill="#fbe36a" stroke="#d39b1c" stroke-width="1.300" stroke-linejoin="round"/><rect x="6.400" y="4.500" width="1.300" height="4" fill="#333"/><rect x="6.400" y="9.500" width="1.300" height="1.300" fill="#333"/></svg><span class="t" style="left:28px;top:7px;font-size:13px;letter-spacing:1px;color:#222">Messages/Alerts</span><svg class="a" style="left:325px;top:6px" width="12" height="12"><path d="M1 1c3-1 5 1 4 3l6 6-1.500 1.500-6-6c-2 1-4-1-3-3l2 2 1.500-1.500z" fill="#555" transform="translate(0 0)"/></svg><div class="row" style="top:36.0px;width:325px;background:#fcd778;"><span>PLM M</span></div><div class="row" style="top:55.4px;width:325px;background:#fff;"><span>PLM M</span></div><div class="row" style="top:74.8px;width:325px;background:#fff;"><span>PLM M</span></div><div class="row" style="top:94.2px;width:325px;background:#fff;"><span>PLM M</span></div><div class="row" style="top:113.6px;width:325px;background:#fff;"><span>PLM M</span></div><div class="row" style="top:133.0px;width:325px;background:#fff;"><span>PLM M</span></div><div class="row" style="top:152.4px;width:325px;background:#fff;"><span>PLM M</span></div><div class="row" style="top:171.8px;width:325px;background:#fff;"><span>PLM M</span></div><div class="row" style="top:191.2px;width:325px;background:#fff;"><span>Creati</span></div><div class="row" style="top:210.6px;width:325px;background:#fff;"><span>Creati</span></div><div class="row" style="top:230.0px;width:325px;background:#fff;"><span>Creati</span></div><div class="row" style="top:249.4px;width:325px;background:#fff;"><span>Creati</span></div><div class="row" style="top:268.8px;width:325px;background:#fff;"><span>Creati</span></div><div class="row" style="top:288.2px;width:325px;background:#fff;"><span>Creati</span></div></div>
<div class="wg" style="left:264px;top:425px;width:345px;height:230px;background:#fff"><div class="wh"></div><svg class="a" style="left:10px;top:4px" width="15" height="13" viewBox="0 0 15 13"><rect x=".7" y=".7" width="13" height="11" fill="#eaf3ff" stroke="#2e7be0" stroke-width="1.400"/><path d="M3 3.500h2M6.500 3.500h5M3 6.200h2M6.500 6.200h5M3 9h2M6.500 9h5" stroke="#2e7be0" stroke-width="1.200"/></svg><span class="t" style="left:29px;top:6px;font-size:13px;color:#222">Common Functions</span><div class="a" style="left:325px;top:25px;width:13px;height:210px;background:#ececec;border-left:1.500px solid #b9b9b9;border-right:1.500px solid #b9b9b9"></div><svg class="a" style="left:10px;top:31.0px" width="15" height="15" viewBox="0 0 15 15"><rect x=".5" y=".5" width="13.500" height="13.500" fill="#eef4fc" stroke="#a9bddb"/><path d="M1 8L8 1h5.500v13H1z" fill="#d9e6f7" opacity=".7"/><path d="M9 1.500v6M6 4.500h6M7 2.500l4 4M11 2.500l-4 4" stroke="#f0761c" stroke-width="1"/><rect x="1.500" y="9.500" width="3.500" height="3.500" fill="#dfe9f7" stroke="#5576b0" stroke-width=".8"/></svg><span class="t" style="left:30.500px;top:34.0px;font-size:9px;letter-spacing:-.2px;color:#222">Pr</span><svg class="a" style="left:10px;top:53.6px" width="15" height="15" viewBox="0 0 15 15"><rect x=".5" y=".5" width="13.500" height="13.500" fill="#eef4fc" stroke="#a9bddb"/><path d="M1 8L8 1h5.500v13H1z" fill="#d9e6f7" opacity=".7"/><path d="M9 1.500v6M6 4.500h6M7 2.500l4 4M11 2.500l-4 4" stroke="#f0761c" stroke-width="1"/><rect x="1.500" y="9.500" width="3.500" height="3.500" fill="#dfe9f7" stroke="#5576b0" stroke-width=".8"/></svg><span class="t" style="left:30.500px;top:56.6px;font-size:9px;letter-spacing:-.2px;color:#222">Ra</span><svg class="a" style="left:10px;top:76.3px" width="15" height="15" viewBox="0 0 15 15"><rect x=".5" y=".5" width="13.500" height="13.500" fill="#eef4fc" stroke="#a9bddb"/><path d="M1 8L8 1h5.500v13H1z" fill="#d9e6f7" opacity=".7"/><path d="M9 1.500v6M6 4.500h6M7 2.500l4 4M11 2.500l-4 4" stroke="#f0761c" stroke-width="1"/><rect x="1.500" y="9.500" width="3.500" height="3.500" fill="#dfe9f7" stroke="#5576b0" stroke-width=".8"/></svg><span class="t" style="left:30.500px;top:79.3px;font-size:9px;letter-spacing:-.2px;color:#222">Sa</span><svg class="a" style="left:10px;top:98.9px" width="15" height="15" viewBox="0 0 15 15"><rect x=".5" y=".5" width="13.500" height="13.500" fill="#eef4fc" stroke="#a9bddb"/><path d="M1 8L8 1h5.500v13H1z" fill="#d9e6f7" opacity=".7"/><path d="M9 1.500v6M6 4.500h6M7 2.500l4 4M11 2.500l-4 4" stroke="#f0761c" stroke-width="1"/><rect x="1.500" y="9.500" width="3.500" height="3.500" fill="#dfe9f7" stroke="#5576b0" stroke-width=".8"/></svg><span class="t" style="left:30.500px;top:101.9px;font-size:9px;letter-spacing:-.2px;color:#222">Se</span><svg class="a" style="left:10px;top:121.6px" width="15" height="15" viewBox="0 0 15 15"><rect x=".5" y=".5" width="13.500" height="13.500" fill="#eef4fc" stroke="#a9bddb"/><path d="M1 8L8 1h5.500v13H1z" fill="#d9e6f7" opacity=".7"/><path d="M9 1.500v6M6 4.500h6M7 2.500l4 4M11 2.500l-4 4" stroke="#f0761c" stroke-width="1"/><rect x="1.500" y="9.500" width="3.500" height="3.500" fill="#dfe9f7" stroke="#5576b0" stroke-width=".8"/></svg><span class="t" style="left:30.500px;top:124.6px;font-size:9px;letter-spacing:-.2px;color:#222">Se</span><svg class="a" style="left:10px;top:144.2px" width="15" height="15" viewBox="0 0 15 15"><rect x=".5" y=".5" width="13.500" height="13.500" fill="#eef4fc" stroke="#a9bddb"/><path d="M1 8L8 1h5.500v13H1z" fill="#d9e6f7" opacity=".7"/><path d="M9 1.500v6M6 4.500h6M7 2.500l4 4M11 2.500l-4 4" stroke="#f0761c" stroke-width="1"/><rect x="1.500" y="9.500" width="3.500" height="3.500" fill="#dfe9f7" stroke="#5576b0" stroke-width=".8"/></svg><span class="t" style="left:30.500px;top:147.2px;font-size:9px;letter-spacing:-.2px;color:#222">A</span><svg class="a" style="left:10px;top:166.9px" width="15" height="15" viewBox="0 0 15 15"><rect x=".5" y=".5" width="13.500" height="13.500" fill="#eef4fc" stroke="#a9bddb"/><path d="M1 8L8 1h5.500v13H1z" fill="#d9e6f7" opacity=".7"/><path d="M9 1.500v6M6 4.500h6M7 2.500l4 4M11 2.500l-4 4" stroke="#f0761c" stroke-width="1"/><rect x="1.500" y="9.500" width="3.500" height="3.500" fill="#dfe9f7" stroke="#5576b0" stroke-width=".8"/></svg><span class="t" style="left:30.500px;top:169.9px;font-size:9px;letter-spacing:-.2px;color:#222">Critical Path Overvie...</span><svg class="a" style="left:10px;top:189.5px" width="15" height="15" viewBox="0 0 15 15"><rect x=".5" y=".5" width="13.500" height="13.500" fill="#eef4fc" stroke="#a9bddb"/><path d="M1 8L8 1h5.500v13H1z" fill="#d9e6f7" opacity=".7"/><path d="M9 1.500v6M6 4.500h6M7 2.500l4 4M11 2.500l-4 4" stroke="#f0761c" stroke-width="1"/><rect x="1.500" y="9.500" width="3.500" height="3.500" fill="#dfe9f7" stroke="#5576b0" stroke-width=".8"/></svg><span class="t" style="left:30.500px;top:192.5px;font-size:9px;letter-spacing:-.2px;color:#222"><u>Size Equivalence Dim...</u></span><svg class="a" style="left:10px;top:212.2px" width="15" height="15" viewBox="0 0 15 15"><rect x=".5" y=".5" width="13.500" height="13.500" fill="#eef4fc" stroke="#a9bddb"/><path d="M1 8L8 1h5.500v13H1z" fill="#d9e6f7" opacity=".7"/><path d="M9 1.500v6M6 4.500h6M7 2.500l4 4M11 2.500l-4 4" stroke="#f0761c" stroke-width="1"/><rect x="1.500" y="9.500" width="3.500" height="3.500" fill="#dfe9f7" stroke="#5576b0" stroke-width=".8"/></svg><span class="t" style="left:30.500px;top:215.2px;font-size:9px;letter-spacing:-.2px;color:#222"></span><svg class="a" style="left:136px;top:166.9px" width="15" height="15" viewBox="0 0 15 15"><rect x=".5" y=".5" width="13.500" height="13.500" fill="#eef4fc" stroke="#a9bddb"/><path d="M1 8L8 1h5.500v13H1z" fill="#d9e6f7" opacity=".7"/><path d="M9 1.500v6M6 4.500h6M7 2.500l4 4M11 2.500l-4 4" stroke="#f0761c" stroke-width="1"/><rect x="1.500" y="9.500" width="3.500" height="3.500" fill="#dfe9f7" stroke="#5576b0" stroke-width=".8"/></svg><span class="t" style="left:156.500px;top:169.9px;font-size:9px;letter-spacing:-.05px;color:#222">Apparel and Footwe...</span><svg class="a" style="left:136px;top:189.5px" width="15" height="15" viewBox="0 0 15 15"><rect x=".5" y=".5" width="13.500" height="13.500" fill="#eef4fc" stroke="#a9bddb"/><path d="M1 8L8 1h5.500v13H1z" fill="#d9e6f7" opacity=".7"/><path d="M9 1.500v6M6 4.500h6M7 2.500l4 4M11 2.500l-4 4" stroke="#f0761c" stroke-width="1"/><rect x="1.500" y="9.500" width="3.500" height="3.500" fill="#dfe9f7" stroke="#5576b0" stroke-width=".8"/></svg><span class="t" style="left:156.500px;top:192.5px;font-size:9px;letter-spacing:-.05px;color:#222">Variable Equivalence...</span></div>
<div class="wg" style="left:617px;top:106px;width:646px;height:523px;border-radius:5px 5px 5px 5px;border-color:#b5b5b5 #9db4dc #9db4dc #b8c4d8;background:#fff"><div class="wh"></div><svg class="a" style="left:9px;top:3px" width="16" height="16" viewBox="0 0 16 16"><circle cx="7.500" cy="8" r="6.500" fill="#f4f8fd" stroke="#4c7fc8" stroke-width="1"/><path d="M3 9a4.500 4.500 0 0 1 4-5" fill="none" stroke="#d03a2a" stroke-width="1.400"/><path d="M8 4a4.500 4.500 0 0 1 4 5" fill="none" stroke="#e8a32a" stroke-width="1.400"/><path d="M7.500 9l3-4" stroke="#444" stroke-width="1.200"/></svg><span class="t" style="left:29px;top:5.900px;font-size:11.400px;color:#222">Sales Analysis Dashboard</span><svg class="a" style="left:596px;top:1px" width="45" height="16"><path d="M8 3.500L4 7.500 8 11.500M16 3.500l4 4L16 11.500" fill="none" stroke="#f2f2f2" stroke-width="1.500"/><path d="M28 2c3-1 5 1 4 3l6 6-1.500 1.500-6-6c-2 1-4-1-3-3l2 2 1.500-1.500z" fill="#4f4f4f"/></svg><div class="a" style="left:628px;top:25px;width:16px;height:496px;background:#f6f6f6"></div><svg class="a" style="left:628px;top:25px" width="16" height="496"><path d="M3 19l5-5 5 5" fill="none" stroke="#bdbdbd" stroke-width="1.800"/><path d="M3 474l5 5 5-5" fill="none" stroke="#bdbdbd" stroke-width="1.800"/></svg><div class="a" style="left:82px;top:32px;width:468px;height:474px;background:#fafafa"></div><div class="a" style="left:93px;top:40px;width:449px;height:459px;background:#fff;border:1px solid #bdbdbd"><div class="a" style="left:0;top:0;right:0;height:23px;background:#cfe0f0;border-bottom:1px solid #b4c6dc"></div></div><div class="a" style="left:380px;top:73px;width:89px;height:14px;background:linear-gradient(#fff,#ececec);border:1px solid #c2c2c2"></div><div class="a" style="left:455px;top:73px;width:14px;height:14px;background:linear-gradient(#e9eef5,#c5d0e0);border:1px solid #b5bccb"></div><svg class="a" style="left:460px;top:78.500px" width="5" height="4"><path d="M0 0h5l-2.500 3.500z" fill="#111"/></svg><div class="a" style="left:110px;top:91px;width:422px;height:188px;border:1px solid #c6c6c6;background:linear-gradient(#fff 75%,#f4f4f4)"></div><div class="a" style="left:110px;top:281px;width:422px;height:206px;border:1px solid #c6c6c6;background:#fff"></div><span class="t" style="left:436px;top:152.0px;font-size:9.3px;color:#222">COUNTRY CLOSET</span><span class="t" style="left:436px;top:165.3px;font-size:9.3px;color:#222">RIVA</span><span class="t" style="left:436px;top:178.6px;font-size:9.3px;color:#222">WIN2012</span><span class="t" style="left:436px;top:191.9px;font-size:9.3px;color:#222">POMIS</span><span class="t" style="left:436px;top:205.2px;font-size:9.3px;color:#222">GORAK</span><div class="a" style="left:438px;top:324.5px;width:87px;height:1px;background:#d5e2f4"></div><div class="a" style="left:438px;top:332.0px;width:87px;height:1px;background:#e4ecf8"></div><div class="a" style="left:438px;top:339.6px;width:87px;height:1px;background:#d5e2f4"></div><div class="a" style="left:438px;top:347.1px;width:87px;height:1px;background:#e4ecf8"></div><div class="a" style="left:438px;top:354.6px;width:87px;height:1px;background:#d5e2f4"></div><div class="a" style="left:438px;top:362.1px;width:87px;height:1px;background:#e4ecf8"></div><div class="a" style="left:438px;top:369.7px;width:87px;height:1px;background:#d5e2f4"></div><div class="a" style="left:438px;top:377.2px;width:87px;height:1px;background:#e4ecf8"></div><div class="a" style="left:438px;top:384.7px;width:87px;height:1px;background:#d5e2f4"></div><div class="a" style="left:438px;top:392.3px;width:87px;height:1px;background:#e4ecf8"></div><div class="a" style="left:438px;top:399.8px;width:87px;height:1px;background:#d5e2f4"></div><div class="a" style="left:438px;top:407.3px;width:87px;height:1px;background:#e4ecf8"></div><div class="a" style="left:438px;top:414.9px;width:87px;height:1px;background:#d5e2f4"></div><div class="a" style="left:438px;top:422.4px;width:87px;height:1px;background:#e4ecf8"></div><div class="a" style="left:438px;top:429.9px;width:87px;height:1px;background:#d5e2f4"></div><div class="a" style="left:438px;top:437.4px;width:87px;height:1px;background:#e4ecf8"></div><div class="a" style="left:438px;top:445.0px;width:87px;height:1px;background:#d5e2f4"></div><div class="a" style="left:438px;top:452.5px;width:87px;height:1px;background:#e4ecf8"></div><div class="a" style="left:438px;top:460px;width:87px;height:1.300px;background:#9ab8e4"></div><div class="a" style="left:465px;top:459px;width:3.500px;height:3.500px;border-radius:2px;background:#8fb0de"></div><div class="a" style="left:494px;top:459px;width:3.500px;height:3.500px;border-radius:2px;background:#8fb0de"></div><span class="t" style="left:436.500px;top:465px;font-size:8.800px;font-weight:bold;letter-spacing:-.3px;color:#1c2a48">ct</span><span class="t" style="left:458px;top:465px;font-size:8.800px;font-weight:bold;letter-spacing:-.3px;color:#1c2a48">Nov</span><span class="t" style="left:487.500px;top:465px;font-size:8.800px;font-weight:bold;letter-spacing:-.3px;color:#1c2a48">Dec</span></div>
<svg class="a" style="left:1124px;top:496px;z-index:50" width="13" height="18" viewBox="0 0 13 18"><path d="M1.500 1v12.500l3-2.800 2.200 5 2-.9-2.200-4.800h4z" fill="#fff" stroke="#111" stroke-width="1"/></svg>
<div id="dlg" class="a" style="left:0;top:0;width:0;height:0;border:0;background:none;box-shadow:none"><div class="a" style="left:302px;top:117px;width:753px;height:476px;background:#efefef;border:1px solid #6f9fe0;border-radius:4px;box-shadow:0 0 2px rgba(80,120,200,.6)"></div><div class="a" style="left:303px;top:118px;width:751px;height:24px;background:linear-gradient(#ffffff,#f2f2f4 30%,#d9d9dd);border-bottom:1px solid #b9b9b9;border-radius:3px 3px 0 0"></div><span class="t" style="left:313px;top:126px;font-size:12px;color:#222">Product</span><svg class="a" style="left:996px;top:121px" width="54" height="17" viewBox="0 0 54 17"><defs><linearGradient id="wb" x1="0" y1="0" x2="0" y2="1"><stop offset="0" stop-color="#e6e6e6"/><stop offset="1" stop-color="#c6c6c6"/></linearGradient></defs><g stroke="#8c8c8c" stroke-width="1"><rect x="1.500" y="1.500" width="14.500" height="14" rx="1.500" fill="url(#wb)"/><rect x="19.500" y="1.500" width="14.500" height="14" rx="1.500" fill="#f2f2f2" stroke="#b0b0b0"/><rect x="37" y="1.500" width="14.500" height="14" rx="1.500" fill="url(#wb)"/></g><rect x="4.500" y="11" width="8.500" height="1.800" fill="#555"/><rect x="22.500" y="5" width="8.500" height="7.500" fill="none" stroke="#555" stroke-width="1.200"/><rect x="22.500" y="4.500" width="8.500" height="1.500" fill="#555"/><path d="M41 5.500l6.500 6.500M47.500 5.500l-6.500 6.500" stroke="#4a4a4a" stroke-width="2.200"/></svg><span class="l" style="left:317.0px;top:149.6px;width:91.0px;">Doc. Numbering</span><div class="f g" style="left:408.0px;top:148.6px;width:97.0px;height:10.7px">Manual</div><span class="l" style="left:317.0px;top:161.8px;width:91.0px;">Code</span><div class="f g" style="left:408.0px;top:160.8px;width:97.0px;height:10.7px">MAL0191</div><span class="l" style="left:317.0px;top:173.9px;width:91.0px;">Description</span><div class="f " style="left:408.0px;top:172.9px;width:97.0px;height:10.7px">Lycra Pants</div><span class="l" style="left:317.0px;top:186.1px;width:91.0px;">Foreign Description</span><div class="f " style="left:408.0px;top:185.1px;width:97.0px;height:10.7px">Lycra Pants</div><span class="l" style="left:317.0px;top:198.3px;width:91.0px;">Status</span><div class="f dd" style="left:408.0px;top:197.3px;width:97.0px;height:10.7px">Season</div><span class="l" style="left:317.0px;top:210.4px;width:91.0px;">Product Line</span><div class="f dd" style="left:408.0px;top:209.4px;width:97.0px;height:10.7px">Women</div><span class="l" style="left:317.0px;top:222.6px;width:91.0px;">Product Group</span><div class="f dd" style="left:408.0px;top:221.6px;width:97.0px;height:10.7px">Pants - Pants</div><span class="l" style="left:317.0px;top:234.8px;width:91.0px;">AF Segmentation</span><div class="f g" style="left:408.0px;top:233.8px;width:97.0px;height:10.7px">Apparel</div><span class="l" style="left:317.0px;top:247.0px;width:91.0px;">SAP Item Group</span><div class="f dd" style="left:408.0px;top:246.0px;width:97.0px;height:10.7px">Pto. Terminado</div><svg class="a" style="left:397.0px;top:210.5px" width="11" height="9" viewBox="0 0 11 9"><path d="M.5 3h5V.8L10.300 4.500 5.500 8.200V6h-5z" fill="#f9d84a" stroke="#c9a21a" stroke-width=".8"/></svg><svg class="a" style="left:397.0px;top:234.5px" width="11" height="9" viewBox="0 0 11 9"><path d="M.5 3h5V.8L10.300 4.500 5.500 8.200V6h-5z" fill="#f9d84a" stroke="#c9a21a" stroke-width=".8"/></svg><div class="a" style="left:313px;top:263px;width:198px;height:80px;border:1px solid #c4c4c4;background:#efefef"></div><span class="l" style="left:317.0px;top:265.8px;width:91.0px;">Season</span><div class="f dd" style="left:408.0px;top:264.8px;width:85.0px;height:10.7px">Winter2014</div><span class="l" style="left:317.0px;top:277.9px;width:91.0px;border-bottom:0;">Collection</span><div class="f " style="left:408.0px;top:276.9px;width:97.0px;height:10.7px"></div><span class="l" style="left:317.0px;top:290.0px;width:91.0px;border-bottom:0;">Sub-Collections</span><div class="f " style="left:408.0px;top:289.0px;width:97.0px;height:10.7px"></div><span class="l" style="left:317.0px;top:302.1px;width:91.0px;border-bottom:0;">Composition</span><div class="f " style="left:408.0px;top:301.1px;width:97.0px;height:10.7px"></div><span class="l" style="left:317.0px;top:314.2px;width:91.0px;border-bottom:0;">Simbols Group</span><div class="f " style="left:408.0px;top:313.2px;width:97.0px;height:10.7px"></div><span class="l" style="left:317.0px;top:326.3px;width:91.0px;border-bottom:0;">Brand</span><div class="f dd" style="left:408.0px;top:325.3px;width:97.0px;height:10.7px"></div><div class="yb" style="left:493.500px;top:264.500px;width:11.500px;height:11.500px;font-size:8px;line-height:8px;letter-spacing:-.8px;color:#8a7420">...</div><span class="l" style="left:520.5px;top:149.6px;width:91.0px;">Designer</span><div class="f " style="left:611.5px;top:148.6px;width:105.5px;height:10.7px"></div><span class="l" style="left:520.5px;top:161.8px;width:91.0px;">Department</span><div class="f dd" style="left:611.5px;top:160.8px;width:105.5px;height:10.7px"></div><span class="l" style="left:520.5px;top:173.6px;width:91.0px;">Year</span><div class="f dd" style="left:611.5px;top:172.6px;width:105.5px;height:10.7px"></div><span class="l" style="left:520.5px;top:186.1px;width:91.0px;">Merchandiser</span><div class="f y" style="left:611.5px;top:185.1px;width:105.5px;height:10.7px"></div><span class="l" style="left:520.5px;top:210.2px;width:91.0px;">Country of Origin</span><div class="f " style="left:611.5px;top:209.2px;width:105.5px;height:10.7px"></div><span class="l" style="left:520.5px;top:222.3px;width:91.0px;">Ship Start Date</span><div class="f " style="left:611.5px;top:221.3px;width:105.5px;height:10.7px"></div><span class="l" style="left:520.5px;top:234.3px;width:91.0px;">Ship Cancel Date</span><div class="f " style="left:611.5px;top:233.3px;width:105.5px;height:10.7px"></div><span class="l" style="left:520.5px;top:246.4px;width:91.0px;">Customer</span><div class="f " style="left:611.5px;top:245.4px;width:105.5px;height:10.7px"></div><span class="l" style="left:520.5px;top:257.6px;width:91.0px;">Vendor</span><div class="f " style="left:611.5px;top:256.6px;width:105.5px;height:10.7px"></div><svg class="a" style="left:708px;top:186.500px" width="8" height="8"><circle cx="4" cy="4" r="3.300" fill="#f3ead0" stroke="#b9b9c9" stroke-width=".8"/><path d="M2.500 4h3" stroke="#aab" stroke-width=".8"/></svg><div class="yb" style="left:718.200px;top:245.200px;width:24px;height:11.300px;font-size:8px;line-height:7px;color:#8a7420">...</div><div class="yb" style="left:718.200px;top:257.300px;width:24px;height:11.300px;font-size:8px;line-height:7px;color:#8a7420">...</div><div class="a" style="left:515.500px;top:270.500px;width:206px;height:73px;border:1px solid #c4c4c4;background:#efefef"></div><span class="l" style="left:520.5px;top:277.0px;width:91.0px;">Main Warehouse</span><div class="f g" style="left:611.5px;top:276.0px;width:56.5px;height:10.7px">02</div><span class="l" style="left:520.5px;top:289.1px;width:91.0px;">Secondary Warehouse</span><div class="f g" style="left:611.5px;top:288.1px;width:105.5px;height:10.7px"></div><span class="l" style="left:520.5px;top:301.1px;width:91.0px;">Price List</span><div class="f g" style="left:611.5px;top:300.1px;width:105.5px;height:10.7px">Retaik</div><span class="l" style="left:520.5px;top:313.2px;width:91.0px;">Currency</span><div class="f g" style="left:611.5px;top:312.2px;width:105.5px;height:10.7px">EUR</div><span class="l" style="left:520.5px;top:325.3px;width:91.0px;">Price</span><div class="f g" style="left:611.5px;top:324.3px;width:56.5px;height:10.7px">100,00</div><div class="yb" style="left:669px;top:273px;width:49px;height:15px;line-height:12px">Add</div><div class="yb" style="left:669px;top:324.500px;width:49px;height:15px;line-height:12px">Add</div><div class="cb" style="left:736.500px;top:148.5px;width:10.500px;height:11px"><svg class="a" style="left:0;top:0" width="8" height="8"><path d="M1.200 3.800l2 2.300 3.600-4.600" fill="none" stroke="#111" stroke-width="1.400"/></svg></div><span class="t" style="left:751.500px;top:149.5px;font-size:9.5px;letter-spacing:-.4px;color:#111">Inventory Item</span><div class="cb" style="left:736.500px;top:160.6px;width:10.500px;height:11px"><svg class="a" style="left:0;top:0" width="8" height="8"><path d="M1.200 3.800l2 2.300 3.600-4.600" fill="none" stroke="#111" stroke-width="1.400"/></svg></div><span class="t" style="left:751.500px;top:161.6px;font-size:9.5px;letter-spacing:-.4px;color:#111">Sales Item</span><div class="cb" style="left:736.500px;top:172.7px;width:10.500px;height:11px"><svg class="a" style="left:0;top:0" width="8" height="8"><path d="M1.200 3.800l2 2.300 3.600-4.600" fill="none" stroke="#111" stroke-width="1.400"/></svg></div><span class="t" style="left:751.500px;top:173.7px;font-size:9.5px;letter-spacing:-.4px;color:#111">Purchased Item</span><div class="cb" style="left:736.500px;top:184.8px;width:10.500px;height:11px"></div><span class="t" style="left:751.500px;top:185.8px;font-size:9.5px;letter-spacing:-.4px;color:#111">Fixed Assets</span><div class="cb" style="left:736.500px;top:196.9px;width:10.500px;height:11px"><svg class="a" style="left:0;top:0" width="8" height="8"><path d="M1.200 3.800l2 2.300 3.600-4.600" fill="none" stroke="#111" stroke-width="1.400"/></svg></div><span class="t" style="left:751.500px;top:197.9px;font-size:9.5px;letter-spacing:-.4px;color:#111">Active</span><div class="cb" style="left:736.500px;top:209.0px;width:10.500px;height:11px"></div><span class="t" style="left:751.500px;top:210.0px;font-size:9.5px;letter-spacing:-.4px;color:#111">Raw Material</span><div class="cb" style="left:736.500px;top:221.1px;width:10.500px;height:11px"></div><span class="t" style="left:751.500px;top:222.1px;font-size:9.5px;letter-spacing:-.4px;color:#111">Embroidery-Engraving</span><div class="a" style="left:853px;top:148px;width:180.500px;height:175.500px;background:#fff"></div><svg class="a" style="left:853px;top:148px" width="181" height="176" viewBox="853 148 181 176">
<defs><linearGradient id="sh" x1="0" y1="0" x2="1" y2="0"><stop offset="0" stop-color="#2a2848"/><stop offset=".3" stop-color="#302e51"/><stop offset=".5" stop-color="#2a2848"/><stop offset=".75" stop-color="#312f52"/><stop offset="1" stop-color="#2b2949"/></linearGradient></defs>
<path d="M889 185.400C905 187.600 922 189.200 938.200 188.800 955 188.300 975 185 988.800 181.600L990.700 185 994.500 192.500 1005.700 211.300 1018.900 233.800 1029.200 258.200 1028.200 262 958.800 279.800 941.900 267.600 930.700 280.700 856.600 266.600 857.500 262 870.600 226.300 882.800 196.300 886.600 186.900z" fill="url(#sh)" stroke="#2b2949" stroke-width=".8" stroke-linejoin="round"/>
<path d="M887 190c17 3 34 4.500 51 4 18-.5 36-3 53-7" fill="none" stroke="#232140" stroke-width="2.200" opacity=".7"/>
<path d="M888 194.500c17 2.500 34 3.700 51 3.300 18-.5 36-3 54-7" fill="none" stroke="#3b3960" stroke-width="1" opacity=".6"/>
<path d="M940 196c1 22 0 48 2 71M903 200c-6 16-14 32-22 52M975 196c8 18 22 40 35 58M925 202c-4 20-12 40-14 60M958 202c6 22 14 40 24 60" fill="none" stroke="#232140" stroke-width="1.600" opacity=".3"/>
</svg><svg class="a" style="left:841.500px;top:289.0px" width="13" height="13" viewBox="0 0 13 13"><rect x="0" y="2" width="12.500" height="10.500" rx="1.500" fill="#1c1c1c"/><rect x="3" y="0" width="5" height="3" fill="#333"/><circle cx="6" cy="7.300" r="3.300" fill="#555" stroke="#cfcfcf" stroke-width="1"/><circle cx="6" cy="7.300" r="1.300" fill="#999"/><path d="M9 9l4 3.500" stroke="#e02020" stroke-width="2"/></svg><svg class="a" style="left:841.500px;top:308.0px" width="13" height="13" viewBox="0 0 13 13"><rect x="0" y="2" width="12.500" height="10.500" rx="1.500" fill="#1c1c1c"/><rect x="3" y="0" width="5" height="3" fill="#333"/><circle cx="6" cy="7.300" r="3.300" fill="#555" stroke="#cfcfcf" stroke-width="1"/><circle cx="6" cy="7.300" r="1.300" fill="#999"/></svg><div class="a" style="left:856.0px;top:324.500px;width:12.500px;height:13.500px;background:linear-gradient(135deg,#f4efb8,#ddd27c);border:1px solid #6a6a50;border-right-color:#222;border-bottom-color:#222;border-radius:0 3px 0 0"></div><div class="a" style="left:872.5px;top:324.500px;width:12.500px;height:13.500px;background:linear-gradient(135deg,#f4efb8,#ddd27c);border:1px solid #6a6a50;border-right-color:#222;border-bottom-color:#222;border-radius:0 3px 0 0"></div><div class="a" style="left:888.0px;top:324.500px;width:12.500px;height:13.500px;background:linear-gradient(135deg,#f4efb8,#ddd27c);border:1px solid #6a6a50;border-right-color:#222;border-bottom-color:#222;border-radius:0 3px 0 0"></div><div class="a" style="left:903.5px;top:324.500px;width:12.500px;height:13.500px;background:linear-gradient(135deg,#f4efb8,#ddd27c);border:1px solid #6a6a50;border-right-color:#222;border-bottom-color:#222;border-radius:0 3px 0 0"></div><svg class="a" style="left:856px;top:324.500px" width="62" height="14"><g fill="#8cc4f2" stroke="#1c2a44" stroke-width=".9"><path d="M6.500 3.500v7L2.500 7zM10.800 3.500v7L6.800 7z"/><path d="M25 3.500v7L20.500 7z"/><path d="M36 3.500v7L40.500 7z"/><path d="M50 3.500v7L54.500 7z"/></g><path d="M55.500 3.500v7" stroke="#1c2a44" stroke-width="1.200"/></svg><svg class="a" style="left:924px;top:323px" width="29" height="15"><rect x="1" y="1" width="10.500" height="12.500" fill="#f0f0f0" stroke="#8a8a8a" stroke-width=".9"/><path d="M2.200 2.500v10" stroke="#b0b0b0" stroke-dasharray="1 1"/><rect x="4.500" y="3" width="5" height="3" fill="#fafafa" stroke="#777" stroke-width=".8"/><rect x="16" y="1" width="10.500" height="12.500" fill="#f0f0f0" stroke="#8a8a8a" stroke-width=".9"/><path d="M17.200 2.500v10" stroke="#b0b0b0" stroke-dasharray="1 1"/><rect x="19.500" y="3" width="5" height="3" fill="#fafafa" stroke="#777" stroke-width=".8"/><path d="M21.500 8.500l6 5.500M27.500 8.500l-6 5.500" stroke="#e42a2a" stroke-width="2.200"/></svg><div class="yb" style="left:958.500px;top:324.500px;width:75px;height:14.500px;line-height:12.500px">Preview Files</div><div class="a" style="left:313px;top:361.500px;width:736px;height:1px;background:#bdbdbd"></div><div class="tab" style="left:321.3px;width:47.5px;font-weight:bold;letter-spacing:0;padding-left:6px;">Size R...</div><div class="tab" style="left:368.8px;width:33.6px;font-weight:bold;letter-spacing:0;padding-left:6px;">Col...</div><div class="tab" style="left:402.4px;width:59.9px;font-weight:bold;letter-spacing:0;padding-left:6px;color:#a3a3a3;">Variable/Kit</div><div class="tab" style="left:462.3px;width:52.9px;font-weight:bold;letter-spacing:0;padding-left:6px;">WorkFlow</div><div class="tab" style="left:515.2px;width:46.6px;">Prepacks</div><div class="tab" style="left:561.8px;width:80.2px;">Design and Logos</div><div class="tab" style="left:642.0px;width:27.6px;">POM</div><div class="tab" style="left:669.6px;width:91.0px;">Constructions Details</div><div class="tab" style="left:760.6px;width:38.9px;">Logos</div><div class="tab" style="left:799.5px;width:98.5px;font-weight:bold;letter-spacing:0;padding-left:6px;background:#fcfcfc;top:345.500px;height:17px;line-height:16px;border-color:#e2e2e2;letter-spacing:-.05px;text-align:left;padding-left:8px;">Cost Sheets - BOMS</div><div class="tab" style="left:898.0px;width:68.0px;">Prod Devel Log</div><div class="tab" style="left:966.0px;width:50.6px;">Comments</div><div class="tab" style="left:1016.6px;width:31.4px;">Stock</div><div class="a" style="left:316.500px;top:369px;width:700.500px;height:17.500px;background:linear-gradient(#dde0e7,#eceef3);border:1px solid #c3c7d0"></div><div class="a" style="left:316.500px;top:386px;width:701px;height:117.500px;background:#e7e7e7;border:1px solid #c3c7d0;border-top:0"></div><div class="a" style="left:317.500px;top:401.500px;width:15.500px;height:101.500px;background:#d5dae4"></div><div class="a" style="left:317.500px;top:387px;width:15.500px;height:14px;background:#e1e4ea"></div><div class="a" style="left:317px;top:401.2px;width:700px;height:1px;background:#c2c5cc"></div><div class="a" style="left:317px;top:402.2px;width:700px;height:1px;background:#f0f1f4"></div><div class="a" style="left:317px;top:415.7px;width:700px;height:1px;background:#c2c5cc"></div><div class="a" style="left:317px;top:416.7px;width:700px;height:1px;background:#f0f1f4"></div><div class="a" style="left:317px;top:430.2px;width:700px;height:1px;background:#c2c5cc"></div><div class="a" style="left:317px;top:431.2px;width:700px;height:1px;background:#f0f1f4"></div><div class="a" style="left:317px;top:444.8px;width:700px;height:1px;background:#c2c5cc"></div><div class="a" style="left:317px;top:445.8px;width:700px;height:1px;background:#f0f1f4"></div><div class="a" style="left:317px;top:459.4px;width:700px;height:1px;background:#c2c5cc"></div><div class="a" style="left:317px;top:460.4px;width:700px;height:1px;background:#f0f1f4"></div><div class="a" style="left:317px;top:473.9px;width:700px;height:1px;background:#c2c5cc"></div><div class="a" style="left:317px;top:474.9px;width:700px;height:1px;background:#f0f1f4"></div><div class="a" style="left:317px;top:488.5px;width:700px;height:1px;background:#c2c5cc"></div><div class="a" style="left:317px;top:489.5px;width:700px;height:1px;background:#f0f1f4"></div><div class="a" style="left:317px;top:503.0px;width:700px;height:1px;background:#c2c5cc"></div><div class="a" style="left:317px;top:504.0px;width:700px;height:1px;background:#f0f1f4"></div><div class="a" style="left:317px;top:386.500px;width:700px;height:1px;background:#b4b8c2"></div><div class="a" style="left:333px;top:369px;width:1px;height:135px;background:#b9bdc6"></div><div class="a" style="left:649px;top:369px;width:1px;height:135px;background:#b9bdc6"></div><span class="t" style="left:321px;top:372px;font-size:9.5px;letter-spacing:-.4px">#</span><span class="t" style="left:337px;top:372px;font-size:9.5px;letter-spacing:-.4px">Code</span><span class="t" style="left:652.500px;top:372px;font-size:9.5px;letter-spacing:-.4px">Description</span><span class="t" style="left:321px;top:390px;font-size:9.5px;letter-spacing:-.4px">1</span><svg class="a" style="left:334.0px;top:390.0px" width="11" height="9" viewBox="0 0 11 9"><path d="M.5 3h5V.8L10.300 4.500 5.500 8.200V6h-5z" fill="#f9d84a" stroke="#c9a21a" stroke-width=".8"/></svg><span class="t" style="left:349px;top:390px;font-size:9.5px;letter-spacing:-.4px">MAL0191</span><span class="t" style="left:651px;top:390px;font-size:9.5px;letter-spacing:-.4px">Internal Manufacturing</span><div class="a" style="left:1017px;top:387.500px;width:15px;height:115px;background:#f1f1f1;border:1px solid #cdcdcd"></div><svg class="a" style="left:1017.500px;top:386px" width="14" height="118"><path d="M3.500 10.500h7l-3.500-4z" fill="#9a9a9a"/><path d="M3.500 107h7l-3.500 4z" fill="#9a9a9a"/></svg><div class="a" style="left:333px;top:503.500px;width:683px;height:15.500px;background:#f1f1f1;border:1px solid #cdcdcd;border-top:0"></div><div class="a" style="left:1003px;top:504px;width:1px;height:14px;background:#d9d9d9"></div><div class="a" style="left:347.500px;top:505.500px;width:374px;height:12.500px;background:linear-gradient(#ececec,#dcdcdc);border:1px solid #c6c6c6;border-radius:1px"></div><svg class="a" style="left:333px;top:504.500px" width="685" height="14"><path d="M10.500 3.500v7L6 7z" fill="#222"/><path d="M673.500 3.500v7L678 7z" fill="#222"/><g fill="#aaa"><rect x="198" y="5" width="1" height="1"/><rect x="201" y="5" width="1" height="1"/><rect x="204" y="5" width="1" height="1"/><rect x="198" y="8" width="1" height="1"/><rect x="201" y="8" width="1" height="1"/><rect x="204" y="8" width="1" height="1"/></g></svg><div class="yb" style="left:318.6px;top:534.1px;width:75.3px;height:14.8px;line-height:11.2px;">Add Cost Sheet</div><div class="yb" style="left:398.8px;top:534.1px;width:96.7px;height:14.8px;line-height:11.2px;padding-right:11px;">BOM Wizard</div><div class="a" style="left:484px;top:535.500px;width:1px;height:11px;background:#9a8a4a"></div><svg class="a" style="left:486px;top:540px" width="7" height="7"><path d="M6 1v5H1z" fill="#111"/></svg><div class="yb" style="left:312.8px;top:559.1px;width:52.2px;height:16.1px;line-height:12.5px;border:1.500px solid #4c4c4c;box-shadow:1px 1px 0 #555;">OK</div><div class="a" style="left:315px;top:560.500px;width:5.500px;height:12.500px;background:linear-gradient(#a9c4ee,#7aa0de)"></div><div class="yb" style="left:366.3px;top:559.1px;width:51.9px;height:15.8px;line-height:12.2px;">Cancel</div><div class="yb" style="left:561.3px;top:559.1px;width:52.4px;height:15.8px;line-height:12.2px;">Copy From</div><div class="yb" style="left:614.8px;top:559.1px;width:52.4px;height:15.8px;line-height:12.2px;">Duplicate</div><div class="yb" style="left:668.0px;top:559.1px;width:56.2px;height:15.8px;line-height:12.2px;">Approve</div><div class="yb" style="left:725.3px;top:559.1px;width:90.2px;height:15.8px;line-height:12.2px;padding-right:10px;">Events and Activit...</div><div class="a" style="left:805px;top:560.500px;width:1px;height:12px;background:#9a8a4a"></div><svg class="a" style="left:807px;top:566px" width="7" height="7"><path d="M6 1v5H1z" fill="#111"/></svg><div class="cb" style="left:855px;top:562px;width:11px;height:11px"></div><span class="t" style="left:870px;top:563px;font-size:9.2px;letter-spacing:-.45px;color:#111">Create UPC Codes</span><div class="yb" style="left:943.3px;top:558.6px;width:89.7px;height:16.1px;line-height:12.5px;">Generate Master Data</div></div>
</body></html>
